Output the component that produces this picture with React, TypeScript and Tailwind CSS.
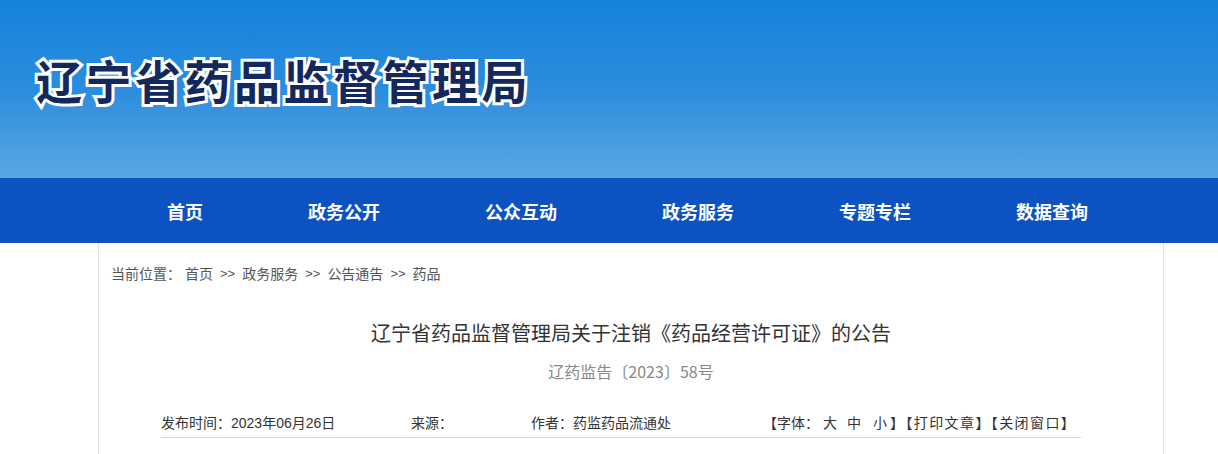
import React from 'react'

const navItems = ['首页', '政务公开', '公众互动', '政务服务', '专题专栏', '数据查询']
const crumbs = ['首页', '政务服务', '公告通告', '药品']

export default function App() {
    return (
        <div className="min-h-screen bg-white font-['Noto_Sans_CJK_SC','Microsoft_YaHei',sans-serif]">
            {/* header banner */}
            <header className="h-[178px] bg-gradient-to-b from-[#1482db] via-[#2a8ddd] to-[#5ba6e4] flex items-start pl-[36px] pt-[47px]">
                <h1 className="text-[46px] leading-[64px] font-bold tracking-[3.5px] text-[#13295d] [-webkit-text-stroke:6px_#ffffff] [paint-order:stroke_fill]">
                    辽宁省药品监督管理局
                </h1>
            </header>

            {/* main nav */}
            <nav className="h-[65px] bg-[#0c52c1] flex items-center gap-[105px] pl-[167px]">
                {navItems.map((item) => (
                    <a key={item} className="text-white text-[18px] font-bold leading-none">
                        {item}
                    </a>
                ))}
            </nav>

            {/* article box */}
            <section className="ml-[98px] w-[1066px] border-x border-[#e3e3e3] min-h-[211px]">
                <p className="pl-[12px] pt-[22px] text-[14px] leading-[18px] text-[#555] flex items-center font-['Liberation_Sans','Noto_Sans_CJK_SC',sans-serif]">
                    <span className="mr-[4px]">当前位置：</span>
                    {crumbs.map((c, i) => (
                        <React.Fragment key={c}>
                            {i > 0 && <span className="mx-[7px] text-[13px]">&gt;&gt;</span>}
                            <span>{c}</span>
                        </React.Fragment>
                    ))}
                </p>

                <h2 className="mt-[36px] text-center text-[20px] leading-[28px] text-[#333]">
                    辽宁省药品监督管理局关于注销《药品经营许可证》的公告
                </h2>
                <p className="mt-[13px] text-center text-[16px] leading-[22px] text-[#888]">
                    辽药监告〔2023〕58号
                </p>

                <div className="mt-[32px] ml-[62px] w-[920px] border-b border-[#d4d4d4] flex items-center text-[14px] leading-[18px] text-[#333] pb-[5px] font-['Liberation_Sans','Noto_Sans_CJK_SC',sans-serif]">
                    <span className="w-[250px] shrink-0">发布时间：2023年06月26日</span>
                    <span className="w-[120px] shrink-0">来源：</span>
                    <span className="w-[232px] shrink-0">作者：药监药品流通处</span>
                    <span className="flex items-center whitespace-nowrap">
                        <span>【字体：</span>
                        <span className="ml-[4px]">大</span>
                        <span className="ml-[10px]">中</span>
                        <span className="ml-[12px]">小</span>
                        <span className="ml-[3px] tracking-[1.4px]">】【打印文章】【关闭窗口】</span>
                    </span>
                </div>
            </section>
        </div>
    )
}
